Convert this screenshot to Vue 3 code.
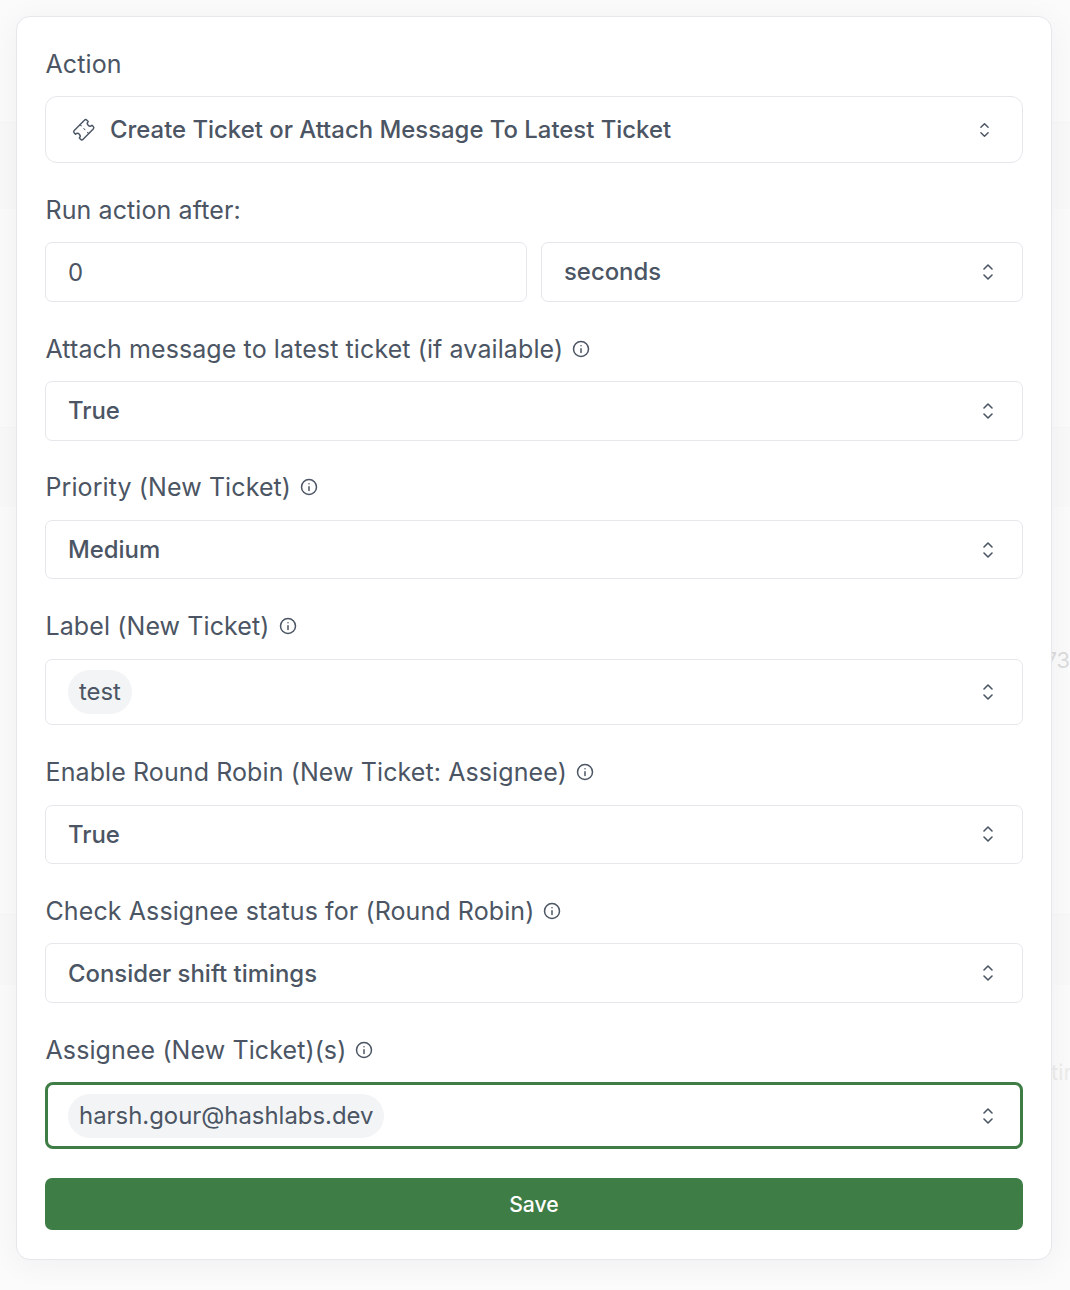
<script setup>
const fields = [
  { label: "Attach message to latest ticket (if available)", value: "True" },
  { label: "Priority (New Ticket)", value: "Medium" },
  { label: "Label (New Ticket)", value: "test", chip: true },
  { label: "Enable Round Robin (New Ticket: Assignee)", value: "True" },
  { label: "Check Assignee status for (Round Robin)", value: "Consider shift timings" },
  { label: "Assignee (New Ticket)(s)", value: "harsh.gour@hashlabs.dev", chip: true, focused: true },
];

// faint table rows showing through behind the dialog
const bands = [
  { top: 122, height: 86 },
  { top: 427, height: 79 },
  { top: 914, height: 70 },
];
</script>

<template>
  <div class="page">
    <div class="backdrop">
      <div
        v-for="band in bands"
        :key="band.top"
        class="band"
        :style="{ top: band.top + 'px', height: band.height + 'px' }"
      ></div>
      <span class="ghost ghost-num">73</span>
      <span class="ghost ghost-word">tir</span>
    </div>
    <div class="card">
      <div class="field">
        <label class="label">Action</label>
        <div class="select select-action">
          <span class="select-value">
            <svg class="ticket" viewBox="0 0 24 24" fill="none" stroke="currentColor" stroke-width="1.6" stroke-linecap="round" stroke-linejoin="round">
              <g transform="rotate(-45 12 12)">
                <path d="M2 9a3 3 0 0 1 0 6v2a2 2 0 0 0 2 2h16a2 2 0 0 0 2-2v-2a3 3 0 0 1 0-6V7a2 2 0 0 0-2-2H4a2 2 0 0 0-2 2Z" />
                <path d="M13 5v2M13 17v2M13 11v2" stroke-width="1.1" />
              </g>
            </svg>
            Create Ticket or Attach Message To Latest Ticket
          </span>
          <svg class="chevrons" viewBox="0 0 12 20" fill="none" stroke="currentColor" stroke-width="1.6" stroke-linecap="round" stroke-linejoin="round">
            <path d="m2 7 4-4 4 4M2 13l4 4 4-4" />
          </svg>
        </div>
      </div>

      <div class="field">
        <label class="label">Run action after:</label>
        <div class="row">
          <div class="select number-input"><span class="input-value">0</span></div>
          <div class="select">
            <span class="select-value">seconds</span>
            <svg class="chevrons" viewBox="0 0 12 20" fill="none" stroke="currentColor" stroke-width="1.6" stroke-linecap="round" stroke-linejoin="round">
              <path d="m2 7 4-4 4 4M2 13l4 4 4-4" />
            </svg>
          </div>
        </div>
      </div>

      <div v-for="field in fields" :key="field.label" class="field">
        <label class="label">
          {{ field.label }}
          <svg class="info" viewBox="0 0 24 24" fill="none" stroke="currentColor" stroke-width="2" stroke-linecap="round">
            <circle cx="12" cy="12" r="10" />
            <path d="M12 16.5V11.5M12 7.5h.01" />
          </svg>
        </label>
        <div class="select" :class="{ 'has-chip': field.chip, focused: field.focused }">
          <span v-if="field.chip" class="chip">{{ field.value }}</span>
          <span v-else class="select-value">{{ field.value }}</span>
          <svg class="chevrons" viewBox="0 0 12 20" fill="none" stroke="currentColor" stroke-width="1.6" stroke-linecap="round" stroke-linejoin="round">
            <path d="m2 7 4-4 4 4M2 13l4 4 4-4" />
          </svg>
        </div>
      </div>

      <button class="save">Save</button>
    </div>
  </div>
</template>

<style scoped>
.page {
  position: relative;
  width: 1070px;
  height: 1290px;
  padding: 16px 18px 0 16px;
  box-sizing: border-box;
  overflow: hidden;
  background: #fbfbfb;
  font-family: Inter, "Liberation Sans", sans-serif;
  color: #4b5563;
}

.backdrop {
  position: absolute;
  inset: 0;
}

.band {
  position: absolute;
  left: 0;
  right: 0;
  background: #f9f9f9;
  border-top: 1px solid #f6f6f6;
}

.ghost {
  position: absolute;
  font-size: 22px;
  line-height: 26px;
  white-space: nowrap;
}

.ghost-num {
  top: 647px;
  left: 1044.5px;
  color: #dcdcdc;
}

.ghost-word {
  top: 1059px;
  left: 1051px;
  color: #ececec;
}

.card {
  position: relative;
  box-sizing: border-box;
  width: 1036px;
  height: 1244px;
  padding: 29px 28px 0;
  background: #fff;
  border: 1px solid #e5e7eb;
  border-radius: 14px;
  box-shadow: 0 4px 32px rgba(0, 0, 0, 0.05);
}

.field {
  margin-bottom: 28.86px;
}

.label {
  display: flex;
  align-items: center;
  gap: 9px;
  height: 36px;
  margin-bottom: 14.35px;
  padding-left: 0.5px;
  font-size: 25px;
  line-height: 36px;
  letter-spacing: 0.1px;
}

.info {
  width: 18px;
  height: 18px;
}

.row {
  display: grid;
  grid-template-columns: 1fr 1fr;
  gap: 14px;
}

.select {
  display: flex;
  align-items: center;
  justify-content: space-between;
  box-sizing: border-box;
  height: 59.65px;
  padding: 0 28px 0 22px;
  border: 1px solid #e5e7eb;
  border-radius: 7px;
  background: #fff;
}

.select-action {
  height: 66.48px;
  padding: 0 32px 0 26.5px;
  border-radius: 12px;
}

.select-action .chevrons {
  width: 11px;
  height: 18px;
}

.select-value {
  display: flex;
  align-items: center;
  gap: 16px;
  font-size: 23.9px;
  font-weight: 500;
}

.input-value {
  padding-top: 1px;
  font-size: 23.9px;
}

.ticket {
  width: 21.5px;
  height: 21.5px;
  overflow: visible;
}

.chevrons {
  width: 12px;
  height: 20px;
}

.has-chip {
  height: 66.78px;
}

.chip {
  padding: 0 11px;
  height: 44px;
  line-height: 44px;
  border-radius: 22px;
  background: #f3f4f6;
  font-size: 23.9px;
}

.focused {
  border: 3px solid #3f7d46;
  border-radius: 8px;
  padding-left: 20px;
  padding-right: 26px;
}

.save {
  display: block;
  width: 100%;
  height: 52px;
  border: none;
  border-radius: 7px;
  background: #3f7d46;
  color: #fff;
  font-family: inherit;
  font-size: 21.2px;
  font-weight: 500;
}
</style>
